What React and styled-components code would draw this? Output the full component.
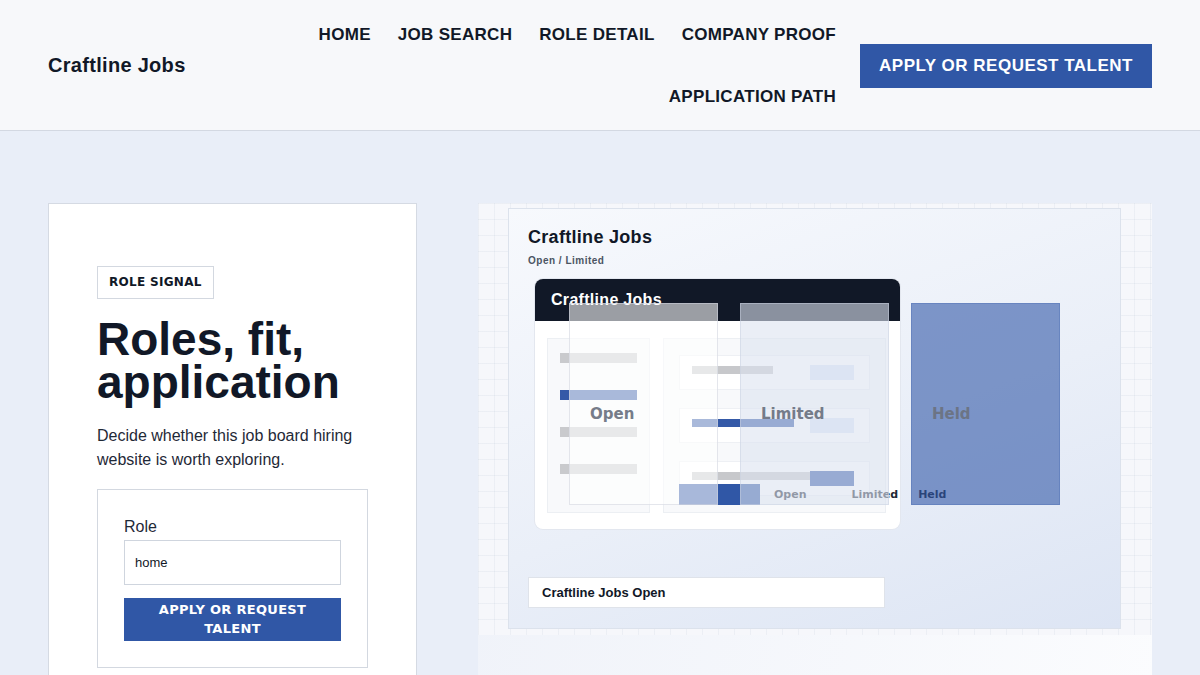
import React from "react";
import styled, { createGlobalStyle } from "styled-components";

const GlobalStyle = createGlobalStyle`
  * { box-sizing: border-box; }
  body {
    margin: 0;
    background: #e9eef8;
    font-family: "Liberation Sans", Arial, sans-serif;
    color: #111827;
  }
`;

const navLinks = ["Home", "Job search", "Role detail", "Company proof", "Application path"];
const sideBars = [false, true, false, false];
const rows = [
  { bar: 81, active: false, chip: false },
  { bar: 102, active: true, chip: false },
  { bar: 118, active: false, chip: true },
];
const columns = [
  { label: "Open", tone: "open" },
  { label: "Limited", tone: "limited" },
  { label: "Held", tone: "held" },
];

export default function App() {
  return (
    <>
      <GlobalStyle />
      <Header>
        <Brand>Craftline Jobs</Brand>
        <Nav>
          {navLinks.map((l) => (
            <NavLink key={l} href="#">
              {l}
            </NavLink>
          ))}
        </Nav>
        <HeaderButton>Apply or request talent</HeaderButton>
      </Header>

      <Main>
        <IntroCard>
          <Badge>Role signal</Badge>
          <Heading>Roles, fit, application</Heading>
          <Lead>Decide whether this job board hiring website is worth exploring.</Lead>
          <FormBox>
            <Label htmlFor="role">Role</Label>
            <Input id="role" defaultValue="home" />
            <SubmitButton>Apply or request talent</SubmitButton>
          </FormBox>
        </IntroCard>

        <Visual>
          <Stage>
            <Frame>
              <FrameTitle>Craftline Jobs</FrameTitle>
              <FrameSub>Open / Limited</FrameSub>
              <Window>
                <WindowBar>Craftline Jobs</WindowBar>
                <WindowBody>
                  <Sidebar>
                    {sideBars.map((active, i) => (
                      <SideBar key={i} $active={active} />
                    ))}
                  </Sidebar>
                  <ListPanel>
                    {rows.map((r, i) => (
                      <ListRow key={i}>
                        <RowBar $active={r.active} style={{ width: r.bar }} />
                        <Chip $strong={r.chip} />
                      </ListRow>
                    ))}
                  </ListPanel>
                </WindowBody>
              </Window>
              <Caption>Craftline Jobs Open</Caption>

              <Legend>
                <LegendSwatch />
                <LegendText $gap={14}>Open</LegendText>
                <LegendText $gap={45}>Limited</LegendText>
                <LegendText $gap={20}>Held</LegendText>
              </Legend>

              <Columns>
                {columns.map((c) => (
                  <Column key={c.label} $tone={c.tone}>
                    <ColumnLabel>{c.label}</ColumnLabel>
                  </Column>
                ))}
              </Columns>
            </Frame>
          </Stage>
          <VisualFoot />
        </Visual>
      </Main>
    </>
  );
}

const Header = styled.header`
  display: flex;
  align-items: center;
  gap: 24px;
  height: 131px;
  padding: 1px 48px 0;
  background: #f7f8fa;
  border-bottom: 1px solid #d3d8e2;
`;

const Brand = styled.div`
  font-size: 20px;
  font-weight: 700;
  letter-spacing: 0.3px;
  white-space: nowrap;
`;

const Nav = styled.nav`
  flex: 1;
  display: flex;
  flex-wrap: wrap;
  justify-content: flex-end;
  column-gap: 27px;
  row-gap: 22px;
`;

const NavLink = styled.a`
  display: block;
  padding: 10px 0;
  line-height: 20px;
  font-size: 17px;
  font-weight: 700;
  letter-spacing: 0.3px;
  text-transform: uppercase;
  color: #111827;
  text-decoration: none;
  white-space: nowrap;
`;

const HeaderButton = styled.button`
  height: 44px;
  padding: 0 19px;
  border: 0;
  background: #3057a6;
  color: #ffffff;
  font-family: "Liberation Sans", Arial, sans-serif;
  font-size: 17px;
  font-weight: 700;
  letter-spacing: 0.5px;
  text-transform: uppercase;
  white-space: nowrap;
`;

const Main = styled.main`
  display: grid;
  grid-template-columns: 369px 1fr;
  column-gap: 61px;
  align-items: start;
  padding: 72px 48px 0;
`;

const IntroCard = styled.section`
  background: #ffffff;
  border: 1px solid #d5dae3;
  padding: 62px 48px 48px;
`;

const Badge = styled.span`
  display: inline-block;
  padding: 9px 11px;
  line-height: 13px;
  border: 1px solid #d3d8e0;
  font-family: "DejaVu Sans", sans-serif;
  font-size: 12px;
  font-weight: 700;
  letter-spacing: 0.3px;
  text-transform: uppercase;
  color: #111827;
`;

const Heading = styled.h1`
  margin: 19px 0 0;
  font-size: 46px;
  line-height: 43px;
  font-weight: 700;
  color: #111827;
`;

const Lead = styled.p`
  margin: 20px 0 0;
  font-size: 16px;
  line-height: 24px;
  color: #1f2937;
`;

const FormBox = styled.form`
  display: flex;
  flex-direction: column;
  margin-top: 17px;
  padding: 28px 26px 26px;
  border: 1px solid #d3d8e0;
`;

const Label = styled.label`
  font-size: 16px;
  line-height: 18px;
  color: #1f2937;
`;

const Input = styled.input`
  margin-top: 4px;
  height: 45px;
  padding: 0 10px;
  border: 1px solid #cfd5de;
  font-family: "Liberation Sans", Arial, sans-serif;
  font-size: 13px;
  color: #111827;
  outline: none;
`;

const SubmitButton = styled.button`
  margin-top: 13px;
  padding: 2px 16px 3px;
  border: 0;
  background: #3057a6;
  color: #ffffff;
  font-family: "DejaVu Sans", sans-serif;
  font-size: 13px;
  line-height: 19px;
  font-weight: 700;
  letter-spacing: 0.3px;
  text-transform: uppercase;
  text-align: center;
`;

const Visual = styled.section`
  background: linear-gradient(100deg, #eff2f9 0%, #fbfcfe 100%);
`;

const Stage = styled.div`
  padding: 5px 31px 6px 30px;
  background-color: #f6f7fb;
  background-image: linear-gradient(rgba(200, 208, 222, 0.22) 1px, transparent 1px),
    linear-gradient(90deg, rgba(200, 208, 222, 0.22) 1px, transparent 1px);
  background-size: 16px 16px;
`;

const VisualFoot = styled.div`
  height: 80px;
`;

const Frame = styled.div`
  position: relative;
  display: flex;
  flex-direction: column;
  align-items: flex-start;
  padding: 17px 20px 20px 19px;
  border: 1px solid #dce2ec;
  background: linear-gradient(160deg, #f7f9fd 0%, #eaeff8 55%, #dde5f4 100%);
`;

const FrameTitle = styled.div`
  font-size: 18px;
  line-height: 22px;
  font-weight: 700;
  letter-spacing: 0.3px;
  color: #111827;
`;

const FrameSub = styled.div`
  margin-top: 7px;
  font-size: 10px;
  line-height: 12px;
  font-weight: 700;
  letter-spacing: 0.5px;
  color: #4b5563;
`;

const Window = styled.div`
  margin: 12px 0 0 7px;
  width: 365px;
  height: 250px;
  border-radius: 8px;
  background: #ffffff;
  box-shadow: 0 0 0 1px #e3e7ef;
  overflow: hidden;
`;

const WindowBar = styled.div`
  height: 42px;
  padding: 0 16px;
  background: #111827;
  color: #ffffff;
  font-size: 16px;
  font-weight: 700;
  letter-spacing: 0.3px;
  line-height: 42px;
`;

const WindowBody = styled.div`
  display: flex;
  gap: 13px;
  padding: 17px 14px 16px 12px;
  height: 208px;
`;

const Sidebar = styled.div`
  display: flex;
  flex-direction: column;
  gap: 27px;
  width: 103px;
  padding: 14px 12px;
  background: #f8f9fb;
  border: 1px solid #eceff3;
`;

const SideBar = styled.div`
  height: 10px;
  width: 77px;
  background: ${(p) => (p.$active ? "#3459a7" : "#c9cacd")};
`;

const ListPanel = styled.div`
  flex: 1;
  display: flex;
  flex-direction: column;
  gap: 18px;
  padding: 16px 15px;
  background: #f8f9fb;
  border: 1px solid #eceff3;
`;

const ListRow = styled.div`
  display: flex;
  align-items: center;
  justify-content: space-between;
  height: 37px;
  padding: 0 15px 0 12px;
  background: #ffffff;
  border: 1px solid #eef0f4;
`;

const RowBar = styled.div`
  height: 8px;
  margin-top: -5px;
  background: ${(p) => (p.$active ? "#3459a7" : "#c7c8cb")};
`;

const Chip = styled.div`
  width: 44px;
  height: 15px;
  background: ${(p) => (p.$strong ? "#3459a7" : "#dce5f8")};
`;

const Caption = styled.div`
  margin-top: 48px;
  width: 357px;
  height: 31px;
  padding: 0 13px;
  background: #ffffff;
  border: 1px solid #dfe3ea;
  font-size: 13px;
  line-height: 29px;
  font-weight: 700;
  color: #111827;
`;

const Legend = styled.div`
  position: absolute;
  left: 170px;
  top: 275px;
  display: flex;
  align-items: center;
  height: 21px;
`;

const LegendSwatch = styled.div`
  width: 81px;
  height: 21px;
  background: #3057a6;
`;

const LegendText = styled.span`
  margin-left: ${(p) => p.$gap}px;
  font-family: "DejaVu Sans", sans-serif;
  font-size: 11px;
  font-weight: 700;
  color: #1f2937;
`;

const tones = {
  open: "background: rgba(255, 255, 255, 0.58); border: 1px solid rgba(205, 210, 220, 0.55);",
  limited: "background: rgba(220, 226, 240, 0.6); border: 1px solid rgba(200, 208, 224, 0.5);",
  held: "background: rgba(48, 87, 166, 0.6); border: 1px solid rgba(48, 87, 166, 0.25);",
};

const Columns = styled.div`
  position: absolute;
  left: 60px;
  top: 94px;
  display: flex;
  gap: 22px;
`;

const Column = styled.div`
  width: 149px;
  height: 202px;
  padding: 101px 20px 0;
  ${(p) => tones[p.$tone]}
`;

const ColumnLabel = styled.div`
  font-family: "DejaVu Sans", sans-serif;
  font-size: 15px;
  line-height: 18px;
  font-weight: 700;
  color: #6b7280;
  opacity: 0.92;
`;
